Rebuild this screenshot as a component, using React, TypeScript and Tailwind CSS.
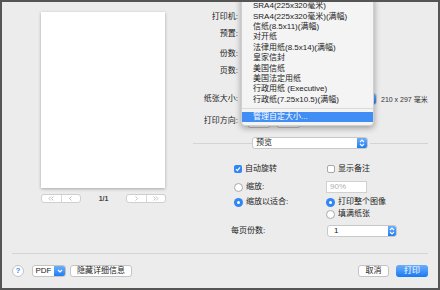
import React from 'react';

const menuItems = [
  'SRA4(225x320毫米)',
  'SRA4(225x320毫米)(满幅)',
  '信纸(8.5x11)(满幅)',
  '对开纸',
  '法律用纸(8.5x14)(满幅)',
  '皇家信封',
  '美国信纸',
  '美国法定用纸',
  '行政用纸 (Executive)',
  '行政纸(7.25x10.5)(满幅)',
];

const Stepper = ({ className = '' }: { className?: string }) => (
  <div className={`flex items-center justify-center bg-gradient-to-b from-[#6aaefb] to-[#1a7cf0] ${className}`}>
    <svg width="6" height="8" viewBox="0 0 6 8" fill="none" stroke="white" strokeWidth="1.1">
      <path d="M1 3l2-2 2 2M1 5l2 2 2-2" />
    </svg>
  </div>
);

const Checkbox = ({ checked }: { checked?: boolean }) =>
  checked ? (
    <div className="w-[8px] h-[8px] rounded-[2px] bg-[#2f86f4] flex items-center justify-center">
      <svg width="6" height="6" viewBox="0 0 6 6" fill="none" stroke="white" strokeWidth="1.2">
        <path d="M1 3.2l1.4 1.4L5 1.3" />
      </svg>
    </div>
  ) : (
    <div className="w-[8px] h-[8px] rounded-[2px] bg-white border border-[#a9a9a9]" />
  );

const Radio = ({ checked }: { checked?: boolean }) =>
  checked ? (
    <div className="w-[9px] h-[9px] rounded-full bg-[#2f86f4] flex items-center justify-center">
      <div className="w-[3px] h-[3px] rounded-full bg-white" />
    </div>
  ) : (
    <div className="w-[9px] h-[9px] rounded-full bg-white border border-[#a9a9a9]" />
  );

const Label = ({ children }: { children: React.ReactNode }) => (
  <div className="w-[48px] text-right text-[#222]">{children}</div>
);

const NavGroup = ({ left }: { left?: boolean }) => (
  <div className="flex w-[40px] h-[9px] bg-white border border-[#cfcfcf] rounded-[3px]">
    <div className="flex-1 flex items-center justify-center border-r border-[#d8d8d8]">
      <svg width="6" height="5" viewBox="0 0 6 5" fill="none" stroke="#b5b5b5" strokeWidth="0.8">
        {left ? <path d="M3 0.5L1 2.5l2 2M5.5 0.5l-2 2 2 2" /> : <path d="M2.5 0.5l2 2-2 2" />}
      </svg>
    </div>
    <div className="flex-1 flex items-center justify-center">
      <svg width="6" height="5" viewBox="0 0 6 5" fill="none" stroke="#b5b5b5" strokeWidth="0.8">
        {left ? <path d="M3.5 0.5l-2 2 2 2" /> : <path d="M0.5 0.5l2 2-2 2M3 0.5l2 2-2 2" />}
      </svg>
    </div>
  </div>
);

export default function App() {
  return (
    <div
      className="relative w-[440px] h-[290px] border-2 border-[#555] bg-[#ececec] overflow-hidden text-[8px] leading-none text-[#222]"
      style={{ fontFamily: '"Liberation Sans", "Noto Sans CJK SC", sans-serif' }}
    >
      <div className="flex h-[251px]">
        {/* preview */}
        <div className="w-[188px] pl-[39px] pt-[10px] flex flex-col">
          <div className="w-[124px] h-[176px] bg-white shadow-[0_1px_3px_rgba(0,0,0,0.3)]" />
          <div className="mt-[6px] w-[125px] flex items-center">
            <NavGroup left />
            <div className="flex-1 text-center text-[7px] font-bold text-[#444]">1/1</div>
            <NavGroup />
          </div>
        </div>

        {/* settings */}
        <div className="flex-1 flex flex-col">
          <div className="mt-[8px] h-[14px] flex items-center"><Label>打印机:</Label></div>
          <div className="mt-[3px] h-[14px] flex items-center"><Label>预置:</Label></div>
          <div className="mt-[6px] h-[14px] flex items-center"><Label>份数:</Label></div>
          <div className="mt-[3px] h-[14px] flex items-center"><Label>页数:</Label></div>
          <div className="mt-[14px] h-[14px] flex items-center">
            <Label>纸张大小:</Label>
            <div className="ml-[8px] w-[131px] h-[12px] flex bg-white border border-[#c8c8c8] rounded-[3px] overflow-hidden">
              <div className="flex-1" />
              <Stepper className="w-[9px]" />
            </div>
            <div className="ml-[4px] text-[7px] text-[#333]">210 x 297 毫米</div>
          </div>
          <div className="mt-[8px] h-[14px] flex items-center">
            <Label>打印方向:</Label>
            <div className="ml-[10px] w-[22px] h-[14px] bg-white border border-[#bdbdbd] rounded-[2px] flex items-end justify-center pb-[2px]">
              <div className="w-[8px] h-px bg-[#555]" />
            </div>
            <div className="ml-[7px] w-[23px] h-[14px] bg-white border border-[#bdbdbd] rounded-[2px] flex items-end justify-center pb-[2px]">
              <div className="w-[10px] h-px bg-[#555]" />
            </div>
          </div>

          <div className="mt-[8px] ml-[3px] w-[235px] h-[14px] flex items-center">
            <div className="w-[59px] h-px bg-[#d4d4d4]" />
            <div className="w-[116px] h-[12px] flex bg-white border border-[#c8c8c8] rounded-[3px] overflow-hidden">
              <div className="flex-1 flex items-center pl-[3px]">预览</div>
              <Stepper className="w-[10px]" />
            </div>
            <div className="ml-[2px] flex-1 h-px bg-[#d4d4d4]" />
          </div>

          <div className="mt-[12px] pl-[44px] h-[14px] flex items-center">
            <div className="w-[93px] flex items-center gap-[3px]"><Checkbox checked />自动旋转</div>
            <div className="flex items-center gap-[3px]"><Checkbox />显示备注</div>
          </div>
          <div className="mt-[4px] pl-[44px] h-[14px] flex items-center">
            <div className="w-[92px] flex items-center gap-[3px]"><Radio />缩放:</div>
            <div className="w-[41px] h-[12px] bg-white border border-[#d0d0d0] flex items-center pl-[3px] text-[#b0b0b0]">90%</div>
          </div>
          <div className="mt-[2px] pl-[44px] h-[12px] flex items-center">
            <div className="w-[92px] flex items-center gap-[3px]"><Radio checked />缩放以适合:</div>
            <div className="flex items-center gap-[3px]"><Radio checked />打印整个图像</div>
          </div>
          <div className="pl-[136px] h-[12px] flex items-center gap-[3px]"><Radio />填满纸张</div>
          <div className="mt-[4px] pl-[41px] h-[13px] flex items-center">
            <div className="w-[96px]">每页份数:</div>
            <div className="w-[70px] h-[12px] flex bg-white border border-[#c8c8c8] rounded-[3px] overflow-hidden">
              <div className="flex-1 flex items-center pl-[6px]">1</div>
              <Stepper className="w-[8px]" />
            </div>
          </div>
        </div>
      </div>

      <div className="mx-[10px] h-px bg-[#d4d4d4]" />

      <div className="h-[34px] px-[10px] flex items-center">
        <div className="w-[12px] h-[12px] rounded-full bg-white border border-[#c4c4c4] flex items-center justify-center text-[8px] font-bold text-[#3a8cf3]">?</div>
        <div className="ml-[8px] w-[34px] h-[12px] flex bg-white border border-[#c4c4c4] rounded-[3px] overflow-hidden">
          <div className="flex-1 flex items-center justify-center">PDF</div>
          <div className="w-[11px] flex items-center justify-center bg-gradient-to-b from-[#6aaefb] to-[#1a7cf0]">
            <svg width="6" height="4" viewBox="0 0 6 4" fill="none" stroke="white" strokeWidth="1.1">
              <path d="M1 1l2 2 2-2" />
            </svg>
          </div>
        </div>
        <div className="ml-[4px] w-[62px] h-[12px] flex items-center justify-center bg-white border border-[#c4c4c4] rounded-[3px]">隐藏详细信息</div>
        <div className="flex-1" />
        <div className="w-[31px] h-[12px] flex items-center justify-center bg-white border border-[#c4c4c4] rounded-[3px]">取消</div>
        <div className="ml-[7px] w-[32px] h-[12px] flex items-center justify-center rounded-[3px] bg-gradient-to-b from-[#6aaefb] to-[#1279f1] text-white">打印</div>
      </div>

      {/* paper size popup menu */}
      <div className="absolute left-[239px] top-[-6px] w-[133px] pt-[4px] pb-[3px] bg-[#f4f4f4] rounded-b-[4px] shadow-[0_2px_6px_rgba(0,0,0,0.35)] border border-[#cfcfcf]">
        {menuItems.map((t) => (
          <div key={t} className="h-[10.4px] flex items-center pl-[11px] text-[#222]">{t}</div>
        ))}
        <div className="h-[7px] flex items-center">
          <div className="w-full h-px bg-[#dadada]" />
        </div>
        <div className="h-[10.4px] flex items-center pl-[11px] bg-[#3f8df5] text-white">管理自定大小...</div>
      </div>
    </div>
  );
}
